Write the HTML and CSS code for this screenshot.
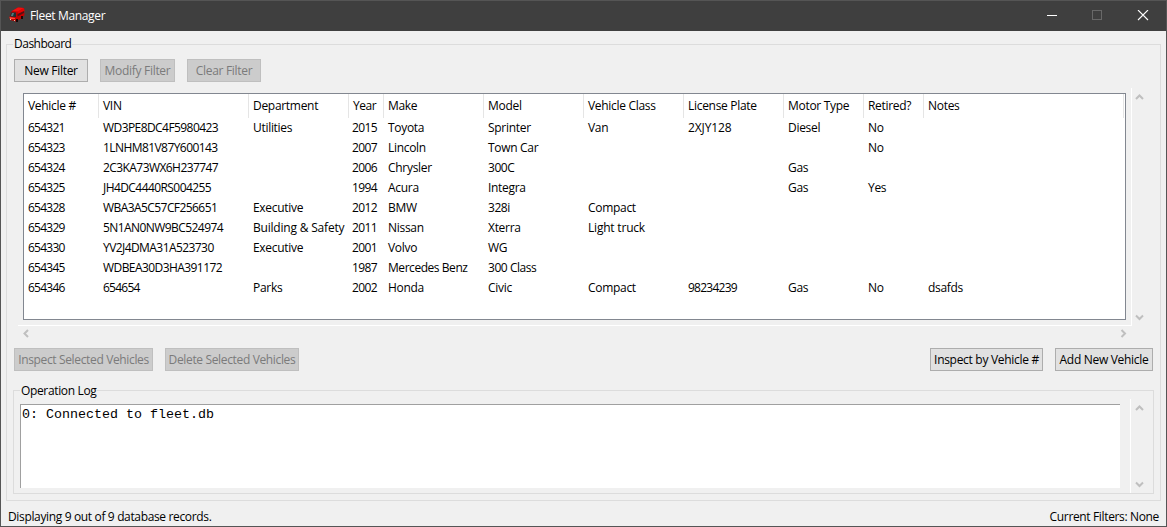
FILE: index.html
```
<!DOCTYPE html>
<html lang="en">
<head>
<meta charset="utf-8">
<title>Fleet Manager</title>
<link rel="stylesheet" href="styles.css">
</head>
<body>
<div class="window">
  <header class="titlebar">
    <svg class="app-icon" width="16" height="16" viewBox="0 0 16 16">
      <path d="M3 4L9 0.500L15 1L15.500 8L13 11L7 14.500L1 13L0.500 10L2 5Z" fill="#c40000"/>
      <path d="M3 4L9 0.500L15 1L9 4.500Z" fill="#f01010"/>
      <path d="M9 4.500L15 1L15.500 4L9 7.500Z" fill="#e80000"/>
      <path d="M2 5.500L7 5.500L7 10L1 9.500Z" fill="#163034"/>
      <path d="M3 6L5 6L4 9L2 9Z" fill="#55777a"/>
      <path d="M8.500 7L15 4L15 6L8.500 9.500Z" fill="#571010"/>
      <path d="M0.500 10L6 11L6 12L1 12Z" fill="#ff4b38"/>
      <path d="M7 12h2v3H7zM12 9h2v3h-2z" fill="#190707"/>
      <path d="M1 12h1v1H1zM5 13h1v1H5z" fill="#dcc7a8"/>
    </svg>
    <h1 class="title">Fleet Manager</h1>
    <svg class="win-controls" width="104" height="12" viewBox="0 0 104 12" fill="none" shape-rendering="crispEdges">
      <path d="M0 5.500H10" stroke="#fff"/>
      <path d="M45.500 0.500H54.500V9.500H45.500Z" stroke="#686868"/>
      <path d="M91 0L101 10M101 0L91 10" stroke="#fff" stroke-width="1.100" shape-rendering="auto"/>
    </svg>
  </header>

  <fieldset class="group dashboard">
    <legend class="t-dash">Dashboard</legend>
    <div class="toolbar">
      <button class="btn w-new">New Filter</button>
      <button class="btn w-modify" disabled>Modify Filter</button>
      <button class="btn w-clear" disabled>Clear Filter</button>
    </div>

    <div class="tree-area">
      <div class="tree-pane">
        <div class="tree">
          <table>
            <colgroup><col class="c75"><col class="c150"><col class="c100"><col class="c35"><col class="c100"><col class="c100"><col class="c100"><col class="c100"><col class="c80"><col class="c60"><col class="c200"></colgroup>
            <thead><tr><th>Vehicle #</th><th>VIN</th><th>Department</th><th class="tight">Year</th><th>Make</th><th>Model</th><th>Vehicle Class</th><th>License Plate</th><th>Motor Type</th><th>Retired?</th><th>Notes</th></tr></thead>
            <tbody>
              <tr><td class="num">654321</td><td class="vin">WD3PE8DC4F5980423</td><td>Utilities</td><td class="num year">2015</td><td>Toyota</td><td>Sprinter</td><td>Van</td><td class="plate">2XJY128</td><td>Diesel</td><td>No</td><td></td></tr>
              <tr><td class="num">654323</td><td class="vin">1LNHM81V87Y600143</td><td></td><td class="num year">2007</td><td>Lincoln</td><td>Town Car</td><td></td><td></td><td></td><td>No</td><td></td></tr>
              <tr><td class="num">654324</td><td class="vin">2C3KA73WX6H237747</td><td></td><td class="num year">2006</td><td>Chrysler</td><td class="tight">300C</td><td></td><td></td><td>Gas</td><td></td><td></td></tr>
              <tr><td class="num">654325</td><td class="vin">JH4DC4440RS004255</td><td></td><td class="num year">1994</td><td>Acura</td><td>Integra</td><td></td><td></td><td>Gas</td><td>Yes</td><td></td></tr>
              <tr><td class="num">654328</td><td class="vin">WBA3A5C57CF256651</td><td>Executive</td><td class="num year">2012</td><td>BMW</td><td class="tight">328i</td><td>Compact</td><td></td><td></td><td></td><td></td></tr>
              <tr><td class="num">654329</td><td class="vin">5N1AN0NW9BC524974</td><td class="wide">Building &amp; Safety</td><td class="num year">2011</td><td>Nissan</td><td>Xterra</td><td class="wide">Light truck</td><td></td><td></td><td></td><td></td></tr>
              <tr><td class="num">654330</td><td class="vin">YV2J4DMA31A523730</td><td>Executive</td><td class="num year">2001</td><td>Volvo</td><td>WG</td><td></td><td></td><td></td><td></td><td></td></tr>
              <tr><td class="num">654345</td><td class="vin">WDBEA30D3HA391172</td><td></td><td class="num year">1987</td><td class="tight">Mercedes Benz</td><td class="tight">300 Class</td><td></td><td></td><td></td><td></td><td></td></tr>
              <tr><td class="num">654346</td><td class="num">654654</td><td>Parks</td><td class="num year">2002</td><td>Honda</td><td>Civic</td><td>Compact</td><td class="num">98234239</td><td>Gas</td><td>No</td><td>dsafds</td></tr>
            </tbody>
          </table>
        </div>
      </div>
      <div class="vscroll">
        <svg class="arrow" width="9" height="7" viewBox="0 0 9 7"><path d="M1 5L4.500 1.500L8 5"/></svg>
        <svg class="arrow" width="9" height="7" viewBox="0 0 9 7"><path d="M1 1.500L4.500 5L8 1.500"/></svg>
      </div>
      <div class="hscroll">
        <svg class="arrow" width="7" height="9" viewBox="0 0 7 9"><path d="M5 1L1.500 4.500L5 8"/></svg>
        <svg class="arrow" width="7" height="9" viewBox="0 0 7 9"><path d="M1.500 1L5 4.500L1.500 8"/></svg>
      </div>
    </div>

    <div class="toolbar actions">
      <button class="btn w-inspect-sel" disabled>Inspect Selected Vehicles</button>
      <button class="btn w-delete-sel" disabled>Delete Selected Vehicles</button>
      <button class="btn w-inspect-num">Inspect by Vehicle #</button>
      <button class="btn w-add">Add New Vehicle</button>
    </div>

    <fieldset class="group log">
      <legend class="t-log">Operation Log</legend>
      <div class="log-area">
        <div class="log-text">0: Connected to fleet.db</div>
        <div class="vscroll">
          <svg class="arrow" width="9" height="7" viewBox="0 0 9 7"><path d="M1 5L4.500 1.500L8 5"/></svg>
          <svg class="arrow" width="9" height="7" viewBox="0 0 9 7"><path d="M1 1.500L4.500 5L8 1.500"/></svg>
        </div>
      </div>
    </fieldset>
  </fieldset>

  <footer class="statusbar"><span>Displaying 9 out of 9 database records.</span><span>Current Filters: None</span></footer>
</div>
</body>
</html>
```
FILE: styles.css
```
* { box-sizing: border-box; }
body {
  margin: 0;
  font: 12px/16px "Open Sans", "Noto Sans", sans-serif;
  letter-spacing: -0.3px;
  color: #000;
}
.window {
  width: 1167px;
  height: 527px;
  border: 1px solid #555;
  background: #f0f0f0;
  overflow: hidden;
}
.titlebar {
  height: 30px;
  display: flex;
  align-items: center;
  padding: 0 15px 0 8px;
  background: #3f3f3f;
  color: #fff;
}
.app-icon { margin-top: -2px; }
.title { margin: 0 0 0 5px; font-size: 12px; font-weight: 400; letter-spacing: -0.35px; }
.win-controls { margin-left: auto; }

.group { margin: 0; padding: 0; border: 1px solid #dcdcdc; min-width: 0; }
.group > legend { height: 13px; line-height: 12px; margin-left: 6px; padding: 0 1px; white-space: nowrap; }
.group > .t-dash { letter-spacing: -0.5px; }
.group > .t-log { line-height: 14px; letter-spacing: -0.35px; }
.dashboard { width: 1155px; height: 463px; margin: 7px 0 0 5px; }

.toolbar { display: flex; gap: 12px; padding: 0 7px; margin-top: 8px; }
.btn {
  height: 23px;
  padding: 0;
  border: 1px solid #adadad;
  border-radius: 0;
  background: #e1e1e1;
  color: #000;
  font: inherit;
  letter-spacing: inherit;
  line-height: 22px;
  white-space: nowrap;
  display: flex;
  justify-content: center;
}
.btn:disabled { background: #ccc; border-color: #bfbfbf; color: #7b7b7b; }
.w-new, .w-clear { width: 74px; }
.w-modify { width: 75px; }
.w-inspect-sel { width: 139px; }
.w-delete-sel { width: 134px; }
.w-inspect-sel, .w-delete-sel { letter-spacing: -0.35px; }
.w-inspect-num { width: 113px; margin-left: auto; }
.w-add { width: 98px; }

.tree-area {
  display: grid;
  grid-template: 238px 15px / 1114px 15px;
  margin: 6px 0 0 11px;
}
.tree-pane { padding: 5px; border: solid #fff; border-width: 0 1px 1px 0; }
.tree { width: 1103px; height: 227px; border: 1px solid #828790; background: #fff; }
table { width: 1100px; table-layout: fixed; border-collapse: separate; border-spacing: 0; }
th, td { padding: 0 0 0 4px; text-align: left; font-weight: 400; white-space: nowrap; line-height: 18px; }
th { height: 24px; border-right: 1px solid #e5e5e5; }
td { height: 20px; }
.c35 { width: 35px; } .c60 { width: 60px; } .c75 { width: 75px; } .c80 { width: 80px; }
.c100 { width: 100px; } .c150 { width: 150px; } .c200 { width: 200px; }
.num { letter-spacing: -0.75px; }
.year { letter-spacing: -0.6px; padding-left: 3px; }
.vin { letter-spacing: -0.57px; }
.plate { letter-spacing: -0.1px; }
.tight { letter-spacing: -0.45px; }
.wide { letter-spacing: -0.2px; }

.vscroll { display: flex; flex-direction: column; justify-content: space-between; align-items: center; padding: 6px 0 5px; }
.hscroll { display: flex; justify-content: space-between; align-items: center; padding: 0 5px; }
.arrow { fill: none; stroke: #bfbfbf; stroke-width: 2; }
.actions { margin-top: 7px; }

.log { height: 110px; margin: 13px 6px 0; }
.log-area { display: flex; }
.log-text {
  width: 1100px;
  height: 84px;
  margin: 7px 10px 0 6px;
  padding: 1px;
  border: solid #a0a0a0;
  border-width: 1px 0 0 1px;
  background: #fff;
  font: 13.333px/17px "Liberation Mono", monospace;
  letter-spacing: 0;
}
.log .vscroll { width: 17px; height: 94px; margin-top: 2px; border-left: 1px solid #fff; }
.statusbar { display: flex; justify-content: space-between; margin-top: 8px; padding: 0 7px; letter-spacing: -0.35px; }
```
